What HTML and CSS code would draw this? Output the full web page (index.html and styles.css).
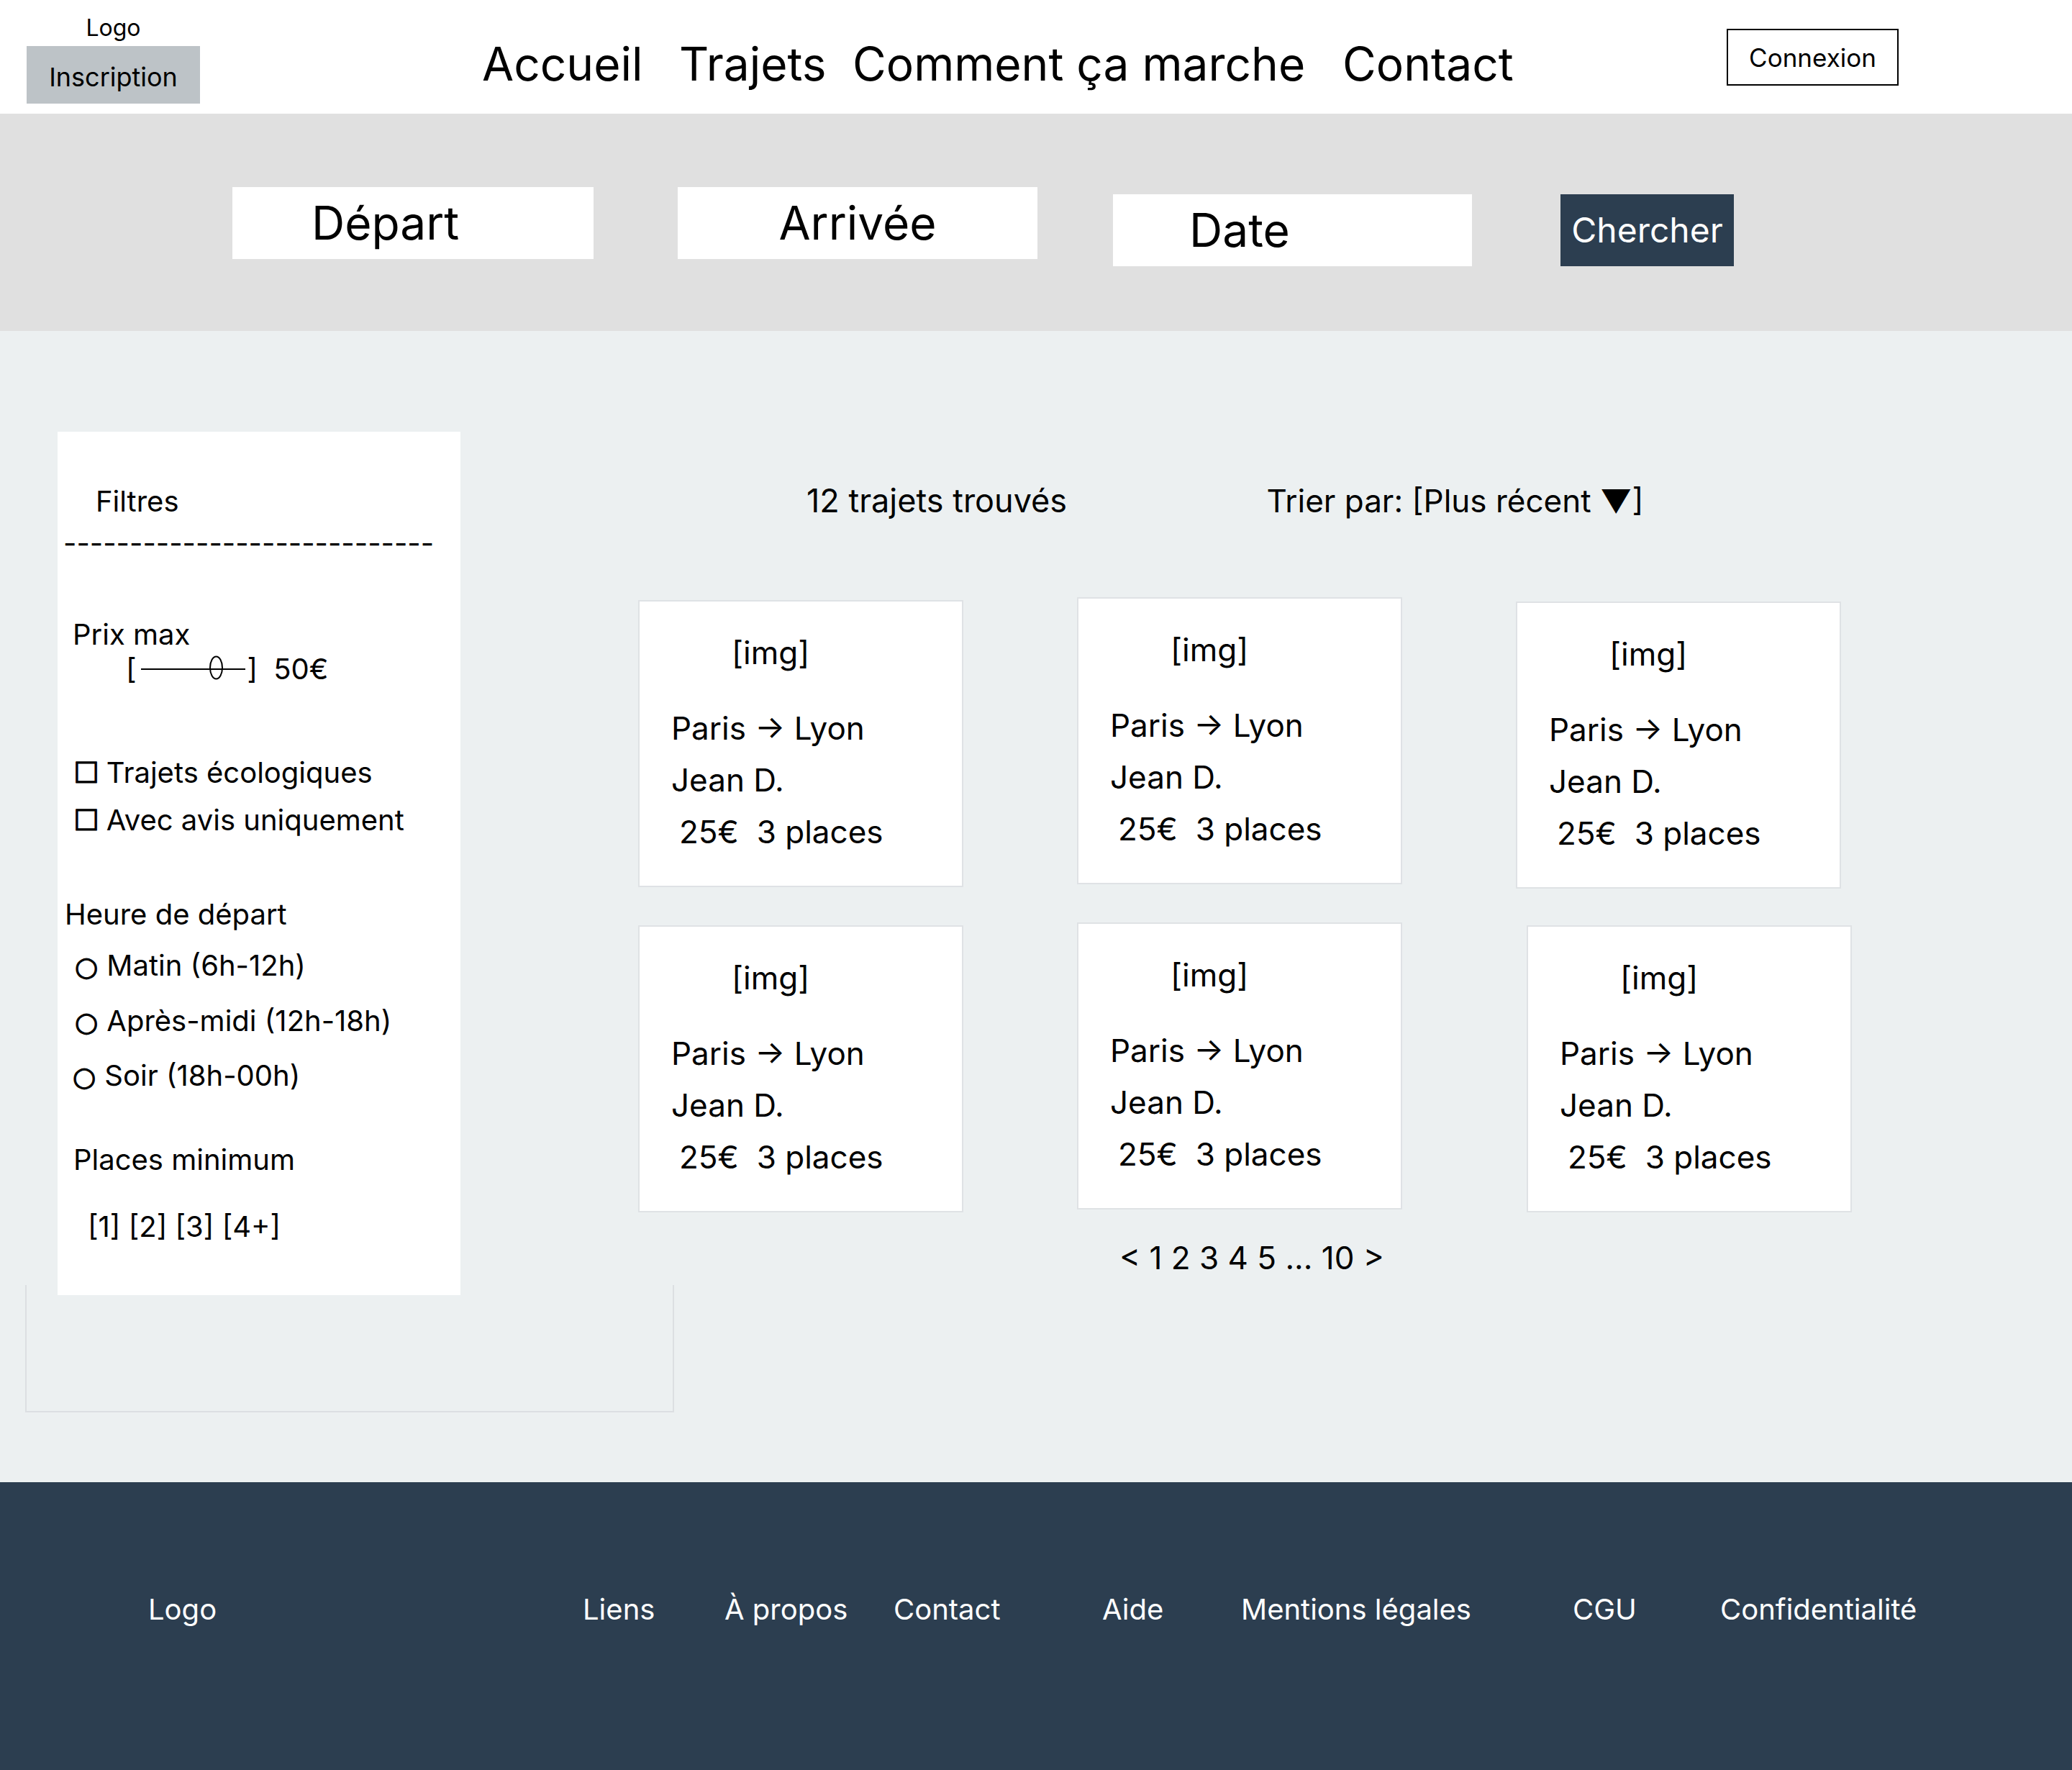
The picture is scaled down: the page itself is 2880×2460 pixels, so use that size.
FILE: index.html
```
<!DOCTYPE html>
<html lang="fr">
<head>
<meta charset="utf-8">
<title>Trajets - Recherche</title>
<link rel="stylesheet" href="styles.css">
</head>
<body>
<header class="topbar">
  <div class="brand">
    <div class="brand-logo">Logo</div>
    <a class="btn-signup">Inscription</a>
  </div>
  <nav class="mainnav">
    <a class="nav-link">Accueil</a>
    <a class="nav-link">Trajets</a>
    <a class="nav-link">Comment ça marche</a>
    <a class="nav-link">Contact</a>
  </nav>
  <a class="btn-login">Connexion</a>
</header>

<section class="searchbar">
  <div class="field field--depart">Départ</div>
  <div class="field field--arrivee">Arrivée</div>
  <div class="field field--date">Date</div>
  <button class="btn-search">Chercher</button>
</section>

<main class="results-page">
  <aside class="sidebar">
    <div class="filters">
      <div class="f-title">Filtres</div>
      <div class="f-rule">----------------------------</div>
      <div class="f-label f-label--price">Prix max</div>
      <div class="f-slider">[<svg class="slider-track" width="145" height="40" viewBox="0 0 145 40"><line x1="0" y1="21" x2="145" y2="21" stroke="#000" stroke-width="2"/><ellipse cx="104.5" cy="19" rx="8.5" ry="15.5" fill="none" stroke="#000" stroke-width="2"/></svg>]<span class="slider-value">50€</span></div>
      <div class="f-check f-check--eco"><span class="box">☐</span>Trajets écologiques</div>
      <div class="f-check f-check--avis"><span class="box">☐</span>Avec avis uniquement</div>
      <div class="f-label f-label--hour">Heure de départ</div>
      <div class="f-radio f-radio--matin"><span class="dot">○</span>Matin (6h-12h)</div>
      <div class="f-radio f-radio--aprem"><span class="dot">○</span>Après-midi (12h-18h)</div>
      <div class="f-radio f-radio--soir"><span class="dot">○</span>Soir (18h-00h)</div>
      <div class="f-label f-label--places">Places minimum</div>
      <div class="f-seats">[1] [2] [3] [4+]</div>
    </div>
    <div class="sidebar-frame"></div>
  </aside>

  <section class="results">
    <div class="results-head">
      <span class="count">12 trajets trouvés</span>
      <span class="sort">Trier par: [Plus récent ▼]</span>
    </div>
    <div class="cards">
      <article class="card">
        <div class="card-img">[img]</div>
        <div class="card-route">Paris → Lyon</div>
        <div class="card-driver">Jean D.</div>
        <div class="card-price">25€&nbsp; 3 places</div>
      </article>
      <article class="card card--up">
        <div class="card-img">[img]</div>
        <div class="card-route">Paris → Lyon</div>
        <div class="card-driver">Jean D.</div>
        <div class="card-price">25€&nbsp; 3 places</div>
      </article>
      <article class="card card--down">
        <div class="card-img">[img]</div>
        <div class="card-route">Paris → Lyon</div>
        <div class="card-driver">Jean D.</div>
        <div class="card-price">25€&nbsp; 3 places</div>
      </article>
      <article class="card">
        <div class="card-img">[img]</div>
        <div class="card-route">Paris → Lyon</div>
        <div class="card-driver">Jean D.</div>
        <div class="card-price">25€&nbsp; 3 places</div>
      </article>
      <article class="card card--up">
        <div class="card-img">[img]</div>
        <div class="card-route">Paris → Lyon</div>
        <div class="card-driver">Jean D.</div>
        <div class="card-price">25€&nbsp; 3 places</div>
      </article>
      <article class="card card--shift">
        <div class="card-img">[img]</div>
        <div class="card-route">Paris → Lyon</div>
        <div class="card-driver">Jean D.</div>
        <div class="card-price">25€&nbsp; 3 places</div>
      </article>
    </div>
    <div class="pager">&lt; 1 2 3 4 5 ... 10 &gt;</div>
  </section>
</main>

<footer class="site-footer">
  <span>Logo</span>
  <span>Liens</span>
  <span>À propos</span>
  <span>Contact</span>
  <span>Aide</span>
  <span>Mentions légales</span>
  <span>CGU</span>
  <span>Confidentialité</span>
</footer>
</body>
</html>
```

FILE: styles.css
```
* { box-sizing: border-box; }

html, body {
  margin: 0;
  padding: 0;
}

body {
  width: 2880px;
  font-family: Inter, "Noto Sans", sans-serif;
  color: #000;
  background: #ecf0f1;
}

a { color: inherit; text-decoration: none; }

/* ---------- Header ---------- */
.topbar {
  display: flex;
  align-items: flex-start;
  height: 158px;
  padding: 19px 0 0 37px;
  background: #fff;
}

.brand {
  width: 241px;
  flex: none;
  display: flex;
  flex-direction: column;
  align-items: center;
}

.brand-logo {
  font-size: 32px;
  line-height: 40px;
}

.btn-signup {
  display: block;
  width: 241px;
  height: 80px;
  margin-top: 5px;
  padding-top: 6px;
  background: #bdc3c7;
  font-size: 36px;
  line-height: 74px;
  text-align: center;
}

.mainnav {
  display: grid;
  grid-template-columns: 274px 241px 681px auto;
  margin: 31px 0 0 392px;
  font-size: 64px;
  line-height: 78px;
  white-space: nowrap;
}

.btn-login {
  display: block;
  width: 239px;
  height: 79px;
  margin: 21px 241px 0 auto;
  padding-top: 2px;
  border: 2px solid #000;
  font-size: 35px;
  line-height: 73px;
  text-align: center;
}

/* ---------- Search bar ---------- */
.searchbar {
  display: flex;
  align-items: flex-start;
  height: 302px;
  padding: 102px 0 0 323px;
  background: #e0e0e0;
}

.field {
  height: 100px;
  background: #fff;
  font-size: 64px;
  line-height: 100px;
  white-space: nowrap;
}

.field--depart { width: 502px; padding-left: 110px; }
.field--arrivee { width: 500px; margin-left: 117px; text-align: center; }
.field--date { width: 499px; margin-left: 105px; margin-top: 10px; padding-left: 106px; }

.btn-search {
  width: 241px;
  height: 100px;
  margin: 10px 0 0 123px;
  padding: 0;
  border: none;
  background: #2c3e50;
  color: #fff;
  font-family: inherit;
  font-size: 48px;
  line-height: 100px;
  text-align: center;
}

/* ---------- Main ---------- */
.results-page {
  display: flex;
  align-items: flex-start;
  height: 1600px;
  padding: 140px 0 0 80px;
  background: #ecf0f1;
}

.sidebar {
  width: 560px;
  flex: none;
}

.filters {
  height: 1200px;
  padding-top: 73px;
  background: #fff;
  font-size: 40px;
  line-height: 48px;
  white-space: nowrap;
}

.filters > div { display: block; }

.f-title { margin-left: 53px; }
.f-rule { margin: 10px 0 0 8px; }
.f-label--price { margin: 79px 0 0 21px; }

.f-slider { margin-left: 95px; }
.slider-track {
  vertical-align: -5px;
  margin: 0 3px 0 6px;
}
.slider-value { margin-left: 22px; }

.f-check { margin-left: 22px; }
.f-check--eco { margin-top: 96px; }
.f-check--avis { margin-top: 18px; }

.box, .dot {
  font-family: "DejaVu Sans", sans-serif;
  display: inline-block;
  line-height: 0;
  -webkit-text-stroke: 1.2px #000;
}
.box { margin-right: 10px; }
.dot { font-size: 37px; margin-right: 12px; }

.f-label--hour { margin: 83px 0 0 10px; }
.f-radio { margin-left: 24px; }
.f-radio--matin { margin-top: 23px; }
.f-radio--aprem { margin-top: 29px; }
.f-radio--soir { margin-top: 28px; margin-left: 21px; }
.f-label--places { margin: 69px 0 0 22px; }
.f-seats { margin: 45px 0 0 42px; }

.sidebar-frame {
  width: 902px;
  height: 177px;
  margin: -14px 0 0 -45px;
  border: 2px solid #dcdfe2;
  border-top: none;
}

.results {
  margin-left: 247px;
  font-size: 44px;
}

.results-head {
  margin-top: 69px;
  padding-left: 234px;
  line-height: 54px;
  white-space: nowrap;
}

.count {
  display: inline-block;
  width: 627px;
  font-size: 45px;
}

.cards {
  display: grid;
  grid-template-columns: repeat(3, 452px);
  column-gap: 158px;
  row-gap: 51px;
  align-items: start;
  margin-top: 111px;
}

.card {
  width: 452px;
  height: 399px;
  padding: 35px 0 0 44px;
  border: 2px solid #dfe2e5;
  background: #fff;
  line-height: 72px;
  white-space: nowrap;
}

.card--up { margin-top: -4px; }
.card--down { margin-top: 2px; }
.card--shift { margin-left: 15px; }

.card-img { margin-left: 84px; }
.card-route { margin-top: 33px; }
.card-price { padding-left: 11px; }

.pager {
  margin-top: 27px;
  padding-left: 669px;
  line-height: 72px;
  white-space: nowrap;
}

/* ---------- Footer ---------- */
.site-footer {
  display: grid;
  grid-template-columns: 604px 197px 235px 290px 193px 461px 205px auto;
  height: 400px;
  padding: 147px 0 0 206px;
  background: #2c3e50;
  color: #fff;
  font-size: 40px;
  line-height: 60px;
  white-space: nowrap;
}
```
